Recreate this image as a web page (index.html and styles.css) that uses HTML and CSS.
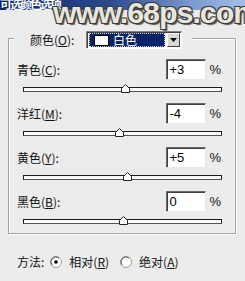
FILE: index.html
```html
<!DOCTYPE html>
<html>
<head>
<meta charset="utf-8">
<link rel="stylesheet" href="styles.css">
</head>
<body>
<div class="dialog">
  <div class="titlebar"><span class="title">可选颜色选项</span></div>
  <div class="group">
    <div class="legend">
      <span class="lbl">颜色(<u>O</u>):</span>
      <div class="select">
        <div class="sel-value"><span class="swatch"></span><span class="sel-text">白色</span></div>
        <div class="sel-btn"><svg width="7" height="4" viewBox="0 0 7 4"><polygon points="0,0 7,0 3.5,4" fill="#000"/></svg></div>
      </div>
    </div>
    <div class="item">
      <div class="row"><span class="lbl">青色(<u>C</u>):</span><span class="input">+3</span><span class="pct">%</span></div>
      <div class="track"><svg class="thumb" style="left:97px" width="9" height="9" viewBox="0 0 9 9"><polygon points="0.5,8.5 0.5,4.5 4.5,0.5 8.5,4.5 8.5,8.5" fill="#fff" stroke="#222"/></svg></div>
    </div>
    <div class="item">
      <div class="row"><span class="lbl">洋红(<u>M</u>):</span><span class="input">-4</span><span class="pct">%</span></div>
      <div class="track"><svg class="thumb" style="left:91px" width="9" height="9" viewBox="0 0 9 9"><polygon points="0.5,8.5 0.5,4.5 4.5,0.5 8.5,4.5 8.5,8.5" fill="#fff" stroke="#222"/></svg></div>
    </div>
    <div class="item">
      <div class="row"><span class="lbl">黄色(<u>Y</u>):</span><span class="input">+5</span><span class="pct">%</span></div>
      <div class="track"><svg class="thumb" style="left:99px" width="9" height="9" viewBox="0 0 9 9"><polygon points="0.5,8.5 0.5,4.5 4.5,0.5 8.5,4.5 8.5,8.5" fill="#fff" stroke="#222"/></svg></div>
    </div>
    <div class="item">
      <div class="row"><span class="lbl">黑色(<u>B</u>):</span><span class="input">0</span><span class="pct">%</span></div>
      <div class="track"><svg class="thumb" style="left:95px" width="9" height="9" viewBox="0 0 9 9"><polygon points="0.5,8.5 0.5,4.5 4.5,0.5 8.5,4.5 8.5,8.5" fill="#fff" stroke="#222"/></svg></div>
    </div>
  </div>
  <div class="method">
    <span class="lbl mlabel">方法:</span>
    <svg class="radio" width="12" height="12" viewBox="0 0 12 12"><circle cx="6" cy="6" r="5.5" fill="#fff" stroke="#9a9a9a"/><path d="M2,9 A5,5 0 0 1 9,2" fill="none" stroke="#555" stroke-width="1"/><circle cx="6" cy="6" r="1.8" fill="#000"/></svg>
    <span class="lbl rlabel">相对(<u>R</u>)</span>
    <svg class="radio r2" width="12" height="12" viewBox="0 0 12 12"><circle cx="6" cy="6" r="5.5" fill="#fff" stroke="#9a9a9a"/><path d="M2,9 A5,5 0 0 1 9,2" fill="none" stroke="#555" stroke-width="1"/></svg>
    <span class="lbl rlabel">绝对(<u>A</u>)</span>
  </div>
  <div class="watermark">www.68ps.com</div>
</div>
</body>
</html>
```
FILE: styles.css
```css
html, body {
  margin: 0;
  padding: 0;
}
body {
  width: 245px;
  height: 281px;
  overflow: hidden;
  background: #ececec;
  font-family: "Noto Sans CJK SC", "Liberation Sans", sans-serif;
  font-size: 12px;
  color: #111;
}
.dialog {
  position: relative;
  width: 245px;
  height: 281px;
}
.titlebar {
  height: 10px;
  overflow: hidden;
  background: linear-gradient(to right, #0b246b 0%, #2c4c8e 45%, #7f9ed0 80%, #a2bde6 100%);
}
.title {
  display: block;
  margin-top: -3px;
  font-size: 12px;
  line-height: 13px;
  font-weight: bold;
  color: #fff;
  letter-spacing: -2px;
}
.group {
  box-sizing: border-box;
  margin: 28px 0 0 8px;
  width: 228px;
  height: 196px;
  border: 1px solid #a3a3a3;
  box-shadow: inset 1px 1px 0 #fff, 1px 1px 0 #fff;
}
.legend {
  box-sizing: border-box;
  display: flex;
  align-items: center;
  justify-content: space-between;
  margin: -8px 0 0 5px;
  width: 178px;
  height: 18px;
  padding: 0 10px 0 16px;
  background: #ececec;
}
.lbl {
  line-height: 14px;
  white-space: nowrap;
}
.lbl u {
  text-underline-offset: 1px;
}
.select {
  box-sizing: border-box;
  display: flex;
  align-items: center;
  width: 96px;
  height: 18px;
  border: 1px solid;
  border-color: #808080 #fff #fff #808080;
  box-shadow: inset 1px 1px 0 #404040;
  background: #fff;
  padding: 1px 1px 1px 2px;
}
.sel-value {
  box-sizing: border-box;
  display: flex;
  align-items: center;
  width: 78px;
  height: 14px;
  background: #0a246a;
  outline: 1px dotted #ccc;
  outline-offset: -1px;
  color: #fff;
  padding-left: 5px;
}
.swatch {
  box-sizing: border-box;
  width: 15px;
  height: 11px;
  background: #fff;
  border: 1px solid #000;
}
.sel-text {
  margin-left: 4px;
  line-height: 12px;
}
.sel-btn {
  box-sizing: border-box;
  display: flex;
  align-items: center;
  justify-content: center;
  width: 13px;
  height: 14px;
  margin-left: 2px;
  background: #d8d8d8;
  border: 1px solid;
  border-color: #fff #404040 #404040 #fff;
}
.item {
  margin-top: 10px;
}
.item + .item {
  margin-top: 11px;
}
.row {
  display: flex;
  align-items: center;
  height: 21px;
  padding: 0 14px 0 8px;
}
.input {
  box-sizing: border-box;
  margin-left: auto;
  width: 40px;
  height: 21px;
  border: 1px solid;
  border-color: #6a6a6a #e8e8e8 #e8e8e8 #6a6a6a;
  box-shadow: inset 1px 1px 0 #404040;
  background: #fff;
  font-family: "Liberation Sans", sans-serif;
  font-size: 13px;
  line-height: 19px;
  padding-left: 2px;
  color: #000;
}
.pct {
  margin-left: 3px;
  font-family: "Liberation Sans", sans-serif;
  font-size: 13px;
}
.track {
  position: relative;
  box-sizing: border-box;
  margin: 7px 0 0 14px;
  width: 199px;
  height: 5px;
  border: 1px solid #1a1a1a;
  border-bottom-color: #555;
  background: #fafafa;
}
.thumb {
  position: absolute;
  top: -4px;
}
.method {
  display: flex;
  align-items: center;
  margin-top: 21px;
  padding-left: 17px;
  height: 14px;
}
.radio {
  margin-left: 6px;
}
.radio.r2 {
  margin-left: 11px;
}
.rlabel {
  margin-left: 7px;
}
.watermark {
  position: absolute;
  left: 53px;
  top: -4px;
  font-family: "Liberation Sans", sans-serif;
  font-weight: bold;
  font-size: 29px;
  line-height: 34px;
  letter-spacing: -1px;
  color: #e6e6de;
  transform: scaleX(1.05);
  transform-origin: left top;
  text-shadow: 1px 1px 0 #3c3c3c, -1px -1px 0 #3c3c3c, 1px -1px 0 #3c3c3c, -1px 1px 0 #3c3c3c, 2px 2px 1px #555;
  white-space: nowrap;
}
```
